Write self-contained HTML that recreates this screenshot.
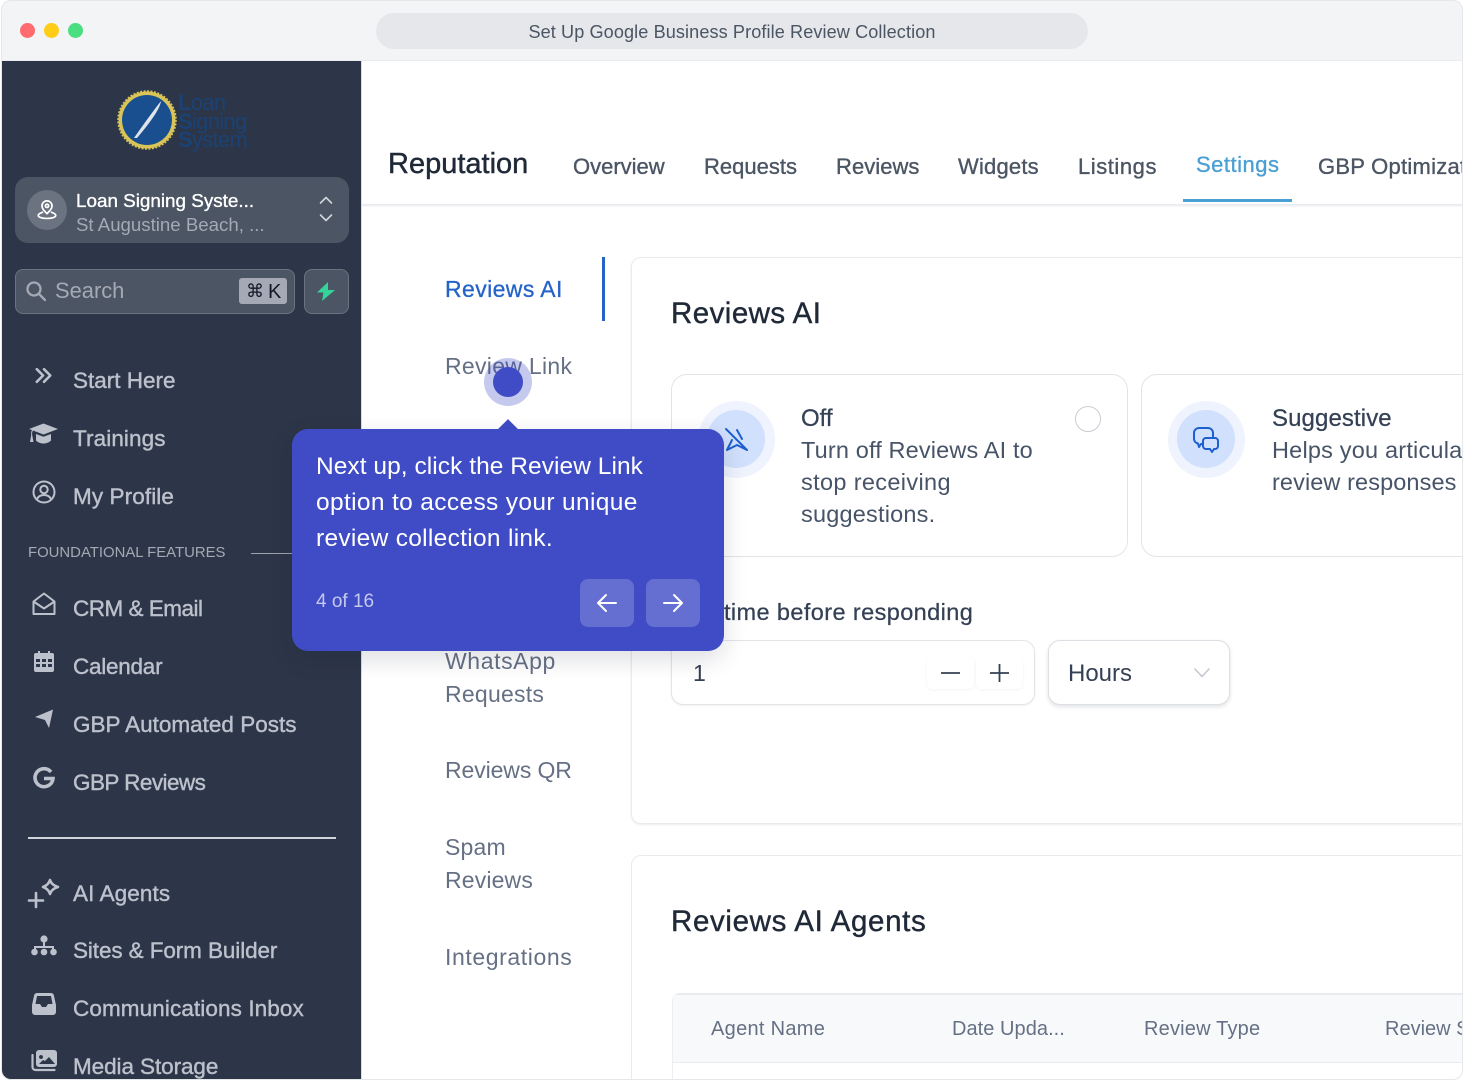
<!DOCTYPE html>
<html lang="en"><head><meta charset="utf-8"><title>Set Up Google Business Profile Review Collection</title>
<style>
html,body{margin:0;padding:0;background:#fff;width:1464px;height:1080px;overflow:hidden}
*{box-sizing:border-box}
body{font-family:"Liberation Sans",sans-serif;position:relative}
.a,.t{position:absolute}
.t{white-space:nowrap;line-height:1}
svg{position:absolute;overflow:visible}
.nav{left:73px;color:#bcc1cc;font-size:22.5px;font-weight:400;-webkit-text-stroke:.4px #bcc1cc}
.tab{top:156px;color:#4b5563;font-size:22px;-webkit-text-stroke:.35px #4b5563}
.side{left:445px;color:#667085;font-size:23px}
.h{color:#1f2937;font-size:29.5px;-webkit-text-stroke:.4px #1f2937}
.ct{color:#344054;font-size:24px;-webkit-text-stroke:.25px #344054}
.cd{color:#475467;font-size:23.5px}
.th{top:1019px;color:#667085;font-size:20px}
.ic{fill:none;stroke:#bcc1cc;stroke-width:2;stroke-linecap:round;stroke-linejoin:round}
.fi{fill:#bcc1cc;stroke:none}
</style></head><body>
<div class="a" style="left:0;top:0;width:1464px;height:61px;background:#f3f4f6;border-bottom:1px solid #e9ebee"></div>
<div class="a" style="left:20px;top:23px;width:15px;height:15px;border-radius:50%;background:#ff6b6f"></div>
<div class="a" style="left:44px;top:23px;width:15px;height:15px;border-radius:50%;background:#ffcc17"></div>
<div class="a" style="left:68px;top:23px;width:15px;height:15px;border-radius:50%;background:#4ade80"></div>
<div class="a" style="left:376px;top:13px;width:712px;height:36px;border-radius:18px;background:#e5e7eb"></div>
<div class="t" style="left:376px;width:712px;text-align:center;top:23px;font-size:18.1px;color:#4b5563;letter-spacing:.1px">Set Up Google Business Profile Review Collection</div>

<!-- sidebar -->
<div class="a" style="left:2px;top:61px;width:359px;height:1019px;background:#2d3648;border-bottom-left-radius:9px"></div>
<div class="a" style="left:361px;top:61px;width:1px;height:1019px;background:#d9dce1"></div>

<!-- logo -->
<svg style="left:114px;top:87px" width="66" height="66" viewBox="0 0 66 66">
<circle cx="33" cy="33" r="28.5" fill="#d9c458"/>
<circle cx="33" cy="33" r="29" fill="none" stroke="#d9c458" stroke-width="1.5" stroke-dasharray="2 1.5"/>
<circle cx="33" cy="33" r="25" fill="#1a4f8f"/>
<path d="M20 51 Q36 28 47 14 Q46 24 23 51Z" fill="#dfe3ea"/>
</svg>
<div class="t" style="left:178px;top:94px;font-size:22px;line-height:18.5px;color:#1a4274;letter-spacing:-.7px;white-space:pre"><b style="font-weight:700">L</b>oan
<b style="font-weight:700">S</b>igning
<b style="font-weight:700">S</b>ystem</div>

<!-- location -->
<div class="a" style="left:15px;top:177px;width:334px;height:66px;border-radius:13px;background:#4b5563"></div>
<div class="a" style="left:27px;top:190px;width:40px;height:40px;border-radius:50%;background:#6b7280"></div>
<svg style="left:36px;top:199px" width="22" height="22" viewBox="0 0 24 24" fill="none" stroke="#fff" stroke-width="1.9" stroke-linecap="round" stroke-linejoin="round">
<path d="M12 16C9 13 6.5 10.5 6.5 7.5a5.500 5.500 0 0 1 11 0c0 3-2.500 5.500-5.500 8.500z"/><circle cx="12" cy="7.500" r="1.800"/>
<path d="M7 14.500C4.500 15.300 2.500 16.500 2.500 18c0 2 4.500 3.200 9.500 3.200s9.500-1.200 9.500-3.200c0-1.500-2-2.700-4.500-3.500"/></svg>
<div class="t" style="left:76px;top:192px;font-size:18.85px;color:#fff;-webkit-text-stroke:.35px #fff">Loan Signing Syste...</div>
<div class="t" style="left:76px;top:216px;font-size:18.65px;color:#a4a9b4">St Augustine Beach, ...</div>
<svg style="left:318px;top:195px" width="16" height="30" viewBox="0 0 16 30" fill="none" stroke="#d1d5db" stroke-width="1.600" stroke-linecap="round" stroke-linejoin="round"><path d="M2.500 8L8 2.500 13.500 8M2.500 20L8 25.500 13.500 20"/></svg>

<!-- search -->
<div class="a" style="left:15px;top:269px;width:280px;height:45px;border-radius:8px;background:#4b5563;border:1px solid #6b7280"></div>
<svg style="left:25px;top:280px" width="22" height="22" viewBox="0 0 22 22" fill="none" stroke="#a4a9b4" stroke-width="2.300" stroke-linecap="round"><circle cx="9" cy="9" r="6.500"/><path d="M14 14l6 6"/></svg>
<div class="t" style="left:55px;top:280px;font-size:21.9px;color:#a4a9b4">Search</div>
<div class="a" style="left:239px;top:278px;width:48px;height:26px;border-radius:3px;background:#a5a9b6"></div>
<div class="t" style="left:246px;top:283px;font-size:18px;color:#111827;font-family:'DejaVu Sans',sans-serif">⌘</div>
<div class="t" style="left:268px;top:282px;font-size:20px;color:#111827">K</div>
<div class="a" style="left:304px;top:269px;width:45px;height:45px;border-radius:8px;background:#4b5563;border:1px solid #6b7280"></div>
<svg style="left:316px;top:281px" width="20" height="21" viewBox="0 0 20 21"><path d="M12 1L1 11.500h6.500L6 20 19 9h-7z" fill="#34d399"/></svg>

<!-- nav text -->
<div class="t nav" style="top:370px">Start Here</div>
<div class="t nav" style="top:428px;letter-spacing:.1px">Trainings</div>
<div class="t nav" style="top:486px;letter-spacing:.1px">My Profile</div>
<div class="t" style="left:28px;top:546px;font-size:14.9px;color:#a4a9b4">FOUNDATIONAL FEATURES</div>
<div class="a" style="left:251px;top:553px;width:60px;height:1px;background:#9ca3af"></div>
<div class="t nav" style="top:598px;letter-spacing:-.5px">CRM &amp; Email</div>
<div class="t nav" style="top:656px;letter-spacing:-.25px">Calendar</div>
<div class="t nav" style="top:714px">GBP Automated Posts</div>
<div class="t nav" style="top:772px;letter-spacing:-.55px">GBP Reviews</div>
<div class="a" style="left:28px;top:837px;width:308px;height:1.500px;background:#d1d5db"></div>
<div class="t nav" style="top:883px;letter-spacing:.1px">AI Agents</div>
<div class="t nav" style="top:940px;letter-spacing:-.1px">Sites &amp; Form Builder</div>
<div class="t nav" style="top:998px;letter-spacing:.1px">Communications Inbox</div>
<div class="t nav" style="top:1056px;letter-spacing:-.08px">Media Storage</div>

<!-- nav icons -->
<svg class="ic" style="left:35px;top:366px;stroke-width:2.800" width="18" height="19" viewBox="0 0 20 20"><path d="M2 3l7 7-7 7M10 3l7 7-7 7"/></svg>
<svg style="left:29px;top:423px" width="29" height="22" viewBox="0 0 29 22"><path class="fi" d="M14.500 0.500L29 6 14.500 11.500 4 7.500C3 9 3 10.500 3.200 12l1.300 7-3.500 0 1.200-7C2 10 2.300 8 3 7L0 6z"/><path class="fi" d="M7 11l7.500 2.800L22 11v6.500c-2 2-5 3-7.500 3S9 19.500 7 17.500z"/></svg>
<svg class="ic" style="left:32px;top:480px" width="24" height="24" viewBox="0 0 24 24"><circle cx="12" cy="12" r="10.500"/><circle cx="12" cy="9.500" r="3.700"/><path d="M5 19c1.500-3 4-4 7-4s5.500 1 7 4"/></svg>
<svg class="ic" style="left:32px;top:592px" width="24" height="24" viewBox="0 0 24 24"><path d="M1.500 9.500L12 1.500l10.500 8v12.500h-21zM1.500 9.500L12 16.500l10.500-7"/></svg>
<svg style="left:34px;top:650px" width="20" height="24" viewBox="0 0 20 24"><path class="fi" fill-rule="evenodd" d="M4 1h2v2h8V1h2v2h2a2 2 0 0 1 2 2v15a2 2 0 0 1-2 2H2a2 2 0 0 1-2-2V5a2 2 0 0 1 2-2h2zM2 9v3h4V9zm6 0v3h4V9zm6 0v3h4V9zM2 14v3h4v-3zm6 0v3h4v-3zm6 0v3h4v-3z"/></svg>
<svg style="left:34px;top:709px" width="20" height="20" viewBox="0 0 20 20"><path class="fi" d="M19 0.500L15 19 11 11 1 8z"/></svg>
<svg style="left:33px;top:767px" width="22" height="22" viewBox="0 0 22 22" fill="none" stroke="#bcc1cc" stroke-width="3.600"><path d="M18 5A9 9 0 1 0 20 11.500H11"/></svg>
<svg style="left:28px;top:878px" width="32" height="32" viewBox="0 0 32 32" fill="none" stroke="#bcc1cc" stroke-width="2.600" stroke-linejoin="round" stroke-linecap="round"><path d="M22 2q1.500 5 8 7-6.500 2-8 7-1.500-5-7-7 5.500-2 7-7z"/><path d="M8 15v14M1 22.500h14"/></svg>
<svg style="left:31px;top:935px" width="26" height="22" viewBox="0 0 26 22"><circle class="fi" cx="13" cy="4" r="3.600"/><path d="M13 7v6M4 15v-3h18v3" fill="none" stroke="#bcc1cc" stroke-width="2"/><circle class="fi" cx="3.500" cy="17" r="3.300"/><circle class="fi" cx="13" cy="17" r="3.300"/><circle class="fi" cx="22.500" cy="17" r="3.300"/></svg>
<svg style="left:32px;top:993px" width="24" height="22" viewBox="0 0 24 22"><path class="fi" fill-rule="evenodd" d="M5 0h14a3 3 0 0 1 3 3l2 9v7a3 3 0 0 1-3 3H3a3 3 0 0 1-3-3v-7l2-9a3 3 0 0 1 3-3zm0 3L3.500 11H8l2 3h4l2-3h4.500L19 3z"/></svg>
<svg style="left:31px;top:1050px" width="26" height="22" viewBox="0 0 26 22"><path d="M1.500 5v12a3 3 0 0 0 3 3h19" fill="none" stroke="#bcc1cc" stroke-width="2.200" stroke-linecap="round"/><path class="fi" fill-rule="evenodd" d="M8 0h15a3 3 0 0 1 3 3v11a3 3 0 0 1-3 3H8a3 3 0 0 1-3-3V3a3 3 0 0 1 3-3zm2 5a2 2 0 1 0 0.010 0zM8 14h16l-6-7-4 4-2-1z"/></svg>

<!-- header -->
<div class="a" style="left:362px;top:204px;width:1102px;height:3px;background:linear-gradient(#e6e8eb,#f8f9fa)"></div>
<div class="t" style="left:388px;top:150px;font-size:29px;color:#1f2937;-webkit-text-stroke:.45px #1f2937">Reputation</div>
<div class="t tab" style="left:573px">Overview</div>
<div class="t tab" style="left:704px">Requests</div>
<div class="t tab" style="left:836px;letter-spacing:.05px">Reviews</div>
<div class="t tab" style="left:958px;letter-spacing:.2px">Widgets</div>
<div class="t tab" style="left:1078px;letter-spacing:.55px">Listings</div>
<div class="t tab" style="left:1196px;top:154px;color:#4a9fd4;-webkit-text-stroke:.35px #4a9fd4;letter-spacing:.5px">Settings</div>
<div class="a" style="left:1183px;top:199px;width:109px;height:3px;background:#4a9fd4"></div>
<div class="t tab" style="left:1318px;letter-spacing:.25px">GBP Optimizat</div>

<!-- side menu -->
<div class="t side" style="top:278px;color:#2563c9;-webkit-text-stroke:.3px #2563c9;letter-spacing:.4px">Reviews AI</div>
<div class="a" style="left:602px;top:257px;width:3px;height:64px;background:#2563c9"></div>
<div class="t side" style="top:355px;letter-spacing:.3px">Review Link</div>
<div class="t side" style="top:650px;letter-spacing:.6px">WhatsApp</div>
<div class="t side" style="top:683px;letter-spacing:.25px">Requests</div>
<div class="t side" style="top:759px;letter-spacing:-.1px">Reviews QR</div>
<div class="t side" style="top:836px;letter-spacing:.2px">Spam</div>
<div class="t side" style="top:869px;letter-spacing:.15px">Reviews</div>
<div class="t side" style="top:946px;letter-spacing:.6px">Integrations</div>

<!-- cards -->
<div class="a" style="left:631px;top:257px;width:840px;height:567px;border:1px solid #e9ebee;border-radius:10px;box-shadow:0 1px 2px rgba(16,24,40,.08);background:#fff"></div>
<div class="t h" style="left:671px;top:299px;letter-spacing:.45px">Reviews AI</div>

<div class="a" style="left:671px;top:374px;width:457px;height:183px;border:1.500px solid #e2e4e8;border-radius:16px;background:#fff"></div>
<div class="a" style="left:698px;top:401px;width:77px;height:77px;border-radius:50%;background:#eef3fe"></div>
<div class="a" style="left:707px;top:410px;width:58px;height:58px;border-radius:50%;background:#d1e0fc"></div>
<svg style="left:724px;top:427px" width="26" height="26" viewBox="0 0 26 26" fill="none" stroke="#1d5fd1" stroke-width="2" stroke-linecap="round" stroke-linejoin="round"><path d="M2 2l21 21M13 3l5 9M23 23l-10-5-10 5 5-10"/></svg>
<div class="t ct" style="left:801px;top:407px">Off</div>
<div class="t cd" style="left:801px;top:439px;letter-spacing:.15px">Turn off Reviews AI to</div>
<div class="t cd" style="left:801px;top:471px;letter-spacing:.35px">stop receiving</div>
<div class="t cd" style="left:801px;top:503px;letter-spacing:.2px">suggestions.</div>
<div class="a" style="left:1075px;top:406px;width:26px;height:26px;border-radius:50%;border:1.500px solid #c9ccd2;background:#fff"></div>

<div class="a" style="left:1141px;top:374px;width:340px;height:183px;border:1.500px solid #e2e4e8;border-radius:16px;background:#fff"></div>
<div class="a" style="left:1168px;top:401px;width:77px;height:77px;border-radius:50%;background:#eef3fe"></div>
<div class="a" style="left:1177px;top:410px;width:58px;height:58px;border-radius:50%;background:#d1e0fc"></div>
<svg style="left:1193px;top:427px" width="26" height="26" viewBox="0 0 26 26" fill="none" stroke="#1d5fd1" stroke-width="2" stroke-linecap="round" stroke-linejoin="round"><path d="M10 17H8l-2 3-1-3.500A5 5 0 0 1 1 12V6a5 5 0 0 1 5-5h9a5 5 0 0 1 5 5v5"/><path d="M13 11h9a3 3 0 0 1 3 3v5a3 3 0 0 1-3 3h-1l-2 3-2-3h-4a3 3 0 0 1-3-3v-5a3 3 0 0 1 3-3z"/></svg>
<div class="t ct" style="left:1272px;top:407px;letter-spacing:.1px">Suggestive</div>
<div class="t cd" style="left:1272px;top:439px;letter-spacing:.2px">Helps you articula</div>
<div class="t cd" style="left:1272px;top:471px;letter-spacing:.1px">review responses</div>

<div class="t ct" style="left:724px;top:601px;color:#344054;font-size:23.500px;letter-spacing:.4px">time before responding</div>

<div class="a" style="left:671px;top:640px;width:364px;height:65px;border:1.500px solid #e2e4e8;border-radius:12px;background:#fff;box-shadow:0 1px 2px rgba(16,24,40,.06)"></div>
<div class="t" style="left:693px;top:662px;font-size:23px;color:#344054">1</div>
<div class="a" style="left:927px;top:657px;width:47px;height:32px;border-radius:6px;box-shadow:0 1px 3px rgba(16,24,40,.05)"></div>
<div class="a" style="left:976px;top:657px;width:47px;height:32px;border-radius:6px;box-shadow:0 1px 3px rgba(16,24,40,.05)"></div>
<svg style="left:940px;top:663px" width="70" height="20" viewBox="0 0 70 20" fill="none" stroke="#344054" stroke-width="1.800"><path d="M1 10h19M50 10h19M59.500 1v18"/></svg>
<div class="a" style="left:1048px;top:640px;width:182px;height:65px;border:1.500px solid #dcdfe4;border-radius:12px;background:#fff;box-shadow:0 2px 4px rgba(16,24,40,.12)"></div>
<div class="t" style="left:1068px;top:662px;font-size:24px;color:#344054">Hours</div>
<svg style="left:1193px;top:667px" width="18" height="11" viewBox="0 0 18 11" fill="none" stroke="#c4c8cf" stroke-width="1.500"><path d="M1.500 1.500L9 9.500l7.500-8"/></svg>

<div class="a" style="left:631px;top:855px;width:840px;height:240px;border:1px solid #e9ebee;border-radius:10px;background:#fff"></div>
<div class="t h" style="left:671px;top:907px;letter-spacing:.65px">Reviews AI Agents</div>
<div class="a" style="left:672px;top:993px;width:800px;height:100px;border:1px solid #eceef1;border-radius:8px 0 0 0;border-top:2px solid #e9ebee;background:#fff"></div>
<div class="a" style="left:673px;top:995px;width:795px;height:68px;background:#f8f9fb;border-bottom:1px solid #e9ebee"></div>
<div class="t th" style="left:711px;letter-spacing:.3px">Agent Name</div>
<div class="t th" style="left:952px;letter-spacing:.05px">Date Upda...</div>
<div class="t th" style="left:1144px;letter-spacing:.2px">Review Type</div>
<div class="t th" style="left:1385px">Review S</div>

<!-- window frame -->
<div class="a" style="left:1px;top:0;width:1462px;height:1080px;border:1px solid #e5e7eb;border-radius:10px;box-shadow:0 0 0 6px #fff"></div>

<!-- tooltip -->
<div class="a" style="left:484px;top:358px;width:48px;height:48px;border-radius:50%;background:rgba(63,76,197,.3)"></div>
<div class="a" style="left:493px;top:367px;width:30px;height:30px;border-radius:50%;background:#3f4cc5"></div>
<div class="a" style="left:501px;top:422px;width:14px;height:14px;background:#3f4cc5;transform:rotate(45deg)"></div>
<div class="a" style="left:292px;top:429px;width:432px;height:222px;border-radius:16px;background:#3f4cc5;box-shadow:0 8px 24px rgba(16,24,40,.14)"></div>
<div class="t" style="left:316px;top:449px;font-size:24.500px;color:#fff;line-height:36px;letter-spacing:.05px">Next up, click the Review Link<br><span style="letter-spacing:.35px">option to access your unique</span><br><span style="letter-spacing:.3px">review collection link.</span></div>
<div class="t" style="left:316px;top:592px;font-size:19px;color:#c5c9ee">4 of 16</div>
<div class="a" style="left:580px;top:579px;width:54px;height:48px;border-radius:8px;background:#656fd1"></div>
<div class="a" style="left:646px;top:579px;width:54px;height:48px;border-radius:8px;background:#656fd1"></div>
<svg style="left:597px;top:593px" width="20" height="20" viewBox="0 0 20 20" fill="none" stroke="#fff" stroke-width="2" stroke-linecap="round" stroke-linejoin="round"><path d="M19 10H1M9 2l-8 8 8 8"/></svg>
<svg style="left:663px;top:593px" width="20" height="20" viewBox="0 0 20 20" fill="none" stroke="#fff" stroke-width="2" stroke-linecap="round" stroke-linejoin="round"><path d="M1 10h18M11 2l8 8-8 8"/></svg>
</body></html>
